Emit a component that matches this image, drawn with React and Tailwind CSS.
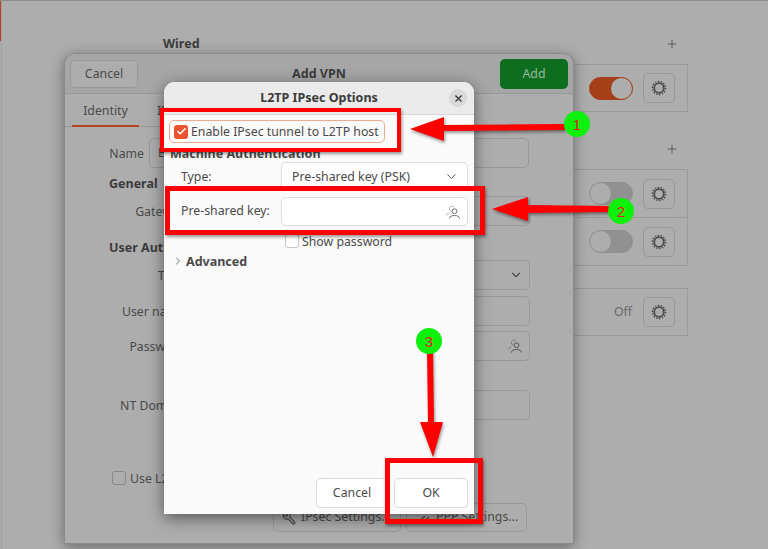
import { Check, ChevronDown, ChevronRight, Plus, Wrench, X } from 'lucide-react'

const FONT = 'font-["Noto_Sans",sans-serif]'

function Gear() {
  return (
    <svg width="16" height="16" viewBox="0 0 16 16" fill="none">
      <circle cx="8" cy="8" r="6.6" stroke="#4a4a4a" strokeWidth="1.3" strokeDasharray="1.6 1.35" />
      <circle cx="8" cy="8" r="4.8" stroke="#4a4a4a" strokeWidth="1.8" />
    </svg>
  )
}

function PersonIcon({ color = '#6e6e6e' }) {
  return (
    <svg width="16" height="16" viewBox="0 0 16 16" fill="none" stroke={color} strokeWidth="1">
      <circle cx="9.5" cy="7.2" r="2.4" />
      <path d="M4.5 14.5c0-2.2 2.2-3 5-3s5 .8 5 3" />
      <path d="M6.3 7.2C4.5 6.6 4 5 4.6 3.6 5.3 2.2 7.4 1.6 8.9 2.8" strokeOpacity="0.55" />
      <path d="M1.5 11.5c.2-1.4 1.2-2.2 2.7-2.5" strokeOpacity="0.55" />
    </svg>
  )
}

function Toggle({ on }) {
  return (
    <div className={`flex h-[23px] w-11 items-center rounded-full border ${on ? 'justify-end border-[#a53f17] bg-[#a53f17]' : 'justify-start border-[#8f8f8f] bg-[#919191]'}`}>
      <div className="h-[21px] w-[21px] rounded-full bg-[#adadad]" />
    </div>
  )
}

function GearButton() {
  return (
    <div className="flex h-[30px] w-8 items-center justify-center rounded-[5px] border border-[#989898]">
      <Gear />
    </div>
  )
}

function CardRow({ children, className = 'h-[46px]' }) {
  return (
    <div className={`flex items-center justify-end gap-[10px] pr-3 ${className}`}>
      {children}
    </div>
  )
}

function BackField({ label, top, labelWidth = 'w-[119px]', fieldWidth = 'w-[340px]', children }) {
  return (
    <div className={`flex h-[30px] items-center ${top}`}>
      <div className={`pt-[2px] text-right text-[#4a4a4a] ${labelWidth}`}>{label}</div>
      <div className={`ml-[5px] flex h-full items-center justify-between rounded-[5px] border border-[#999] pl-2 pr-[6px] text-[#4a4a4a] ${fieldWidth}`}>
        {children}
      </div>
    </div>
  )
}

function Annotation({ left, top, children }) {
  return (
    <div
      className={`absolute flex h-[26px] w-[26px] items-center justify-center rounded-full bg-[#0bf10b] font-["Liberation_Sans",sans-serif] text-[15px] leading-none text-[#ee1122] ${left} ${top}`}
    >
      {children}
    </div>
  )
}

export default function App() {
  return (
    <div className={`relative h-[549px] w-[768px] overflow-hidden border-t border-[#8e8e8e] bg-[#adadad] text-[12.3px] ${FONT}`}>
      {/* sidebar edge */}
      <div className="absolute left-0 top-0 h-[40px] w-[1px] bg-[#b5451e]" />
      <div className="absolute left-[1px] top-0 h-full w-[1px] bg-[#a0a0a0]" />

      {/* network settings behind the dialogs */}
      <div className="absolute left-[163px] top-[33px] w-[525px]">
        <div className="flex h-5 items-center justify-between pr-[9px]">
          <span className="text-[12.5px] font-bold text-[#3c3c3c]">Wired</span>
          <Plus size={14} strokeWidth={1.2} className="text-[#3c3c3c]" />
        </div>
        <div className="mt-[10px] border border-[#9a9a9a]">
          <CardRow><Toggle on /><GearButton /></CardRow>
        </div>
        <div className="mt-[27px] flex h-5 items-center justify-end pr-[9px]">
          <Plus size={14} strokeWidth={1.2} className="text-[#3c3c3c]" />
        </div>
        <div className="mt-[10px] border border-[#9a9a9a]">
          <CardRow className="h-[47px]"><Toggle /><GearButton /></CardRow>
          <CardRow className="h-[48px] border-t border-[#9a9a9a]"><Toggle /><GearButton /></CardRow>
        </div>
        <div className="mt-[22px] border border-[#9a9a9a]">
          <CardRow><span className="mr-[1px] text-[#6a6a6a]">Off</span><GearButton /></CardRow>
        </div>
      </div>

      {/* Add VPN dialog */}
      <div className="absolute left-[64px] top-[52px] h-[491px] w-[510px] rounded-t-[11px] border border-[#8a8a8a] bg-[#adadad] shadow-[0_3px_14px_rgba(0,0,0,0.4)]">
        <div className="flex h-10 items-center justify-between rounded-t-[10px] border-b border-[#989898] bg-[#a6a6a6] pl-[5px] pr-[5px]">
          <div className="flex h-[28px] w-[68px] items-center justify-center rounded-[5px] border border-[#989898] bg-[#adadad] pt-[2px] text-[#4a4a4a]">Cancel</div>
          <div className="pt-[1px] text-[12.5px] font-bold text-[#3c3c3c]">Add VPN</div>
          <div className="flex h-[30px] w-[68px] items-center justify-center rounded-[5px] bg-[#0d6e1f] pt-[2px] text-[#9cb89f]">Add</div>
        </div>
        <div className="flex h-[33px] border-b border-[#989898] text-[#4a4a4a]">
          <div className="ml-[7px] flex h-[33px] w-[67px] items-center justify-center border-b-2 border-[#b5451e] pt-[3px]">Identity</div>
          <div className="ml-[18px] flex items-center pt-[3px]">IPv4</div>
        </div>
        <BackField label="Name" top="mt-[11px]" labelWidth="w-[79px]" fieldWidth="w-[380px]">E</BackField>
        <div className="ml-[44px] mt-[6px] h-5 text-[12.5px] font-bold leading-5 text-[#3c3c3c]">General</div>
        <BackField label="Gateway" top="mt-[2px]" labelWidth="w-[120px]" />
        <div className="ml-[44px] mt-[12px] h-5 text-[12.5px] font-bold leading-5 text-[#3c3c3c]">User Authentication</div>
        <BackField label="Type" top="mt-[2px]" labelWidth="w-[120px]"><span>Password</span><ChevronDown size={14} /></BackField>
        <BackField label="User name" top="mt-[6px]" labelWidth="w-[120px]" />
        <BackField label="Password" top="mt-[5px]" labelWidth="w-[120px]"><span /><PersonIcon color="#555" /></BackField>
        <BackField label="NT Domain" top="mt-[29px]" labelWidth="w-[120px]" />
        <div className="ml-[47px] mt-[48px] flex h-5 items-center gap-[4px] text-[#4a4a4a]">
          <div className="h-[14px] w-[14px] rounded-[3px] border border-[#8a8a8a]" />
          <span className="pt-[2px]">Use L2TP</span>
        </div>
        <div className="ml-[208px] mt-[15px] flex gap-[5px] text-[#4a4a4a]">
          <div className="flex h-[29px] w-[128px] items-center gap-[5px] rounded-[5px] border border-[#999] pl-[8px]">
            <Wrench size={14} className="-scale-x-100" />
            <span>IPsec Settings...</span>
          </div>
          <div className="flex h-[29px] w-[121px] items-center gap-[6px] rounded-[5px] border border-[#999] pl-[9px]">
            <svg width="14" height="14" viewBox="0 0 14 14" fill="none" stroke="#4a4a4a" strokeWidth="1.2">
              <path d="M1 12 9 5M5 13l8-7" />
            </svg>
            <span>PPP Settings...</span>
          </div>
        </div>
      </div>

      {/* L2TP IPsec options */}
      <div className="absolute left-[164px] top-[81px] flex h-[432px] w-[310px] flex-col rounded-t-[11px] bg-[#fafafa] text-[#4a4a4a] shadow-[0_4px_16px_rgba(0,0,0,0.5)]">
        <div className="relative flex h-[33px] items-center justify-center rounded-t-[11px] border-b border-[#d8d8d8] bg-[#ebebeb]">
          <span className="text-[12.5px] font-bold text-[#3a3a3a]">L2TP IPsec Options</span>
          <div className="absolute right-[7px] top-[7px] flex h-[18px] w-[18px] items-center justify-center rounded-full bg-[#d9d9d9]">
            <X size={11} strokeWidth={2.5} className="text-[#333]" />
          </div>
        </div>
        <div className="ml-[5px] mt-[5px] flex h-[23px] w-[216px] items-center gap-[3px] whitespace-nowrap rounded-[5px] border border-[#f0a890] pl-1">
          <div className="flex h-[14px] w-[14px] items-center justify-center rounded-[3px] bg-[#e9532f]">
            <Check size={11} strokeWidth={3.5} className="text-white" />
          </div>
          <span className="pt-[2px]">Enable IPsec tunnel to L2TP host</span>
        </div>
        <div className="ml-[6px] h-5 pt-[1px] text-[12.5px] font-bold leading-5">Machine Authentication</div>
        <div className="ml-[17px] mt-[-1px] flex h-[29px] items-center">
          <div className="w-[100px] pt-[2px]">Type:</div>
          <div className="flex h-full w-[187px] items-center justify-between rounded-[5px] border border-[#ddd] bg-white pl-[10px] pr-2">
            <span className="pt-[2px]">Pre-shared key (PSK)</span>
            <ChevronDown size={15} strokeWidth={1.5} />
          </div>
        </div>
        <div className="ml-[17px] mt-[6px] flex h-[29px] items-center">
          <div className="w-[100px]">Pre-shared key:</div>
          <div className="flex h-full w-[187px] items-center justify-end rounded-[5px] border border-[#ddd] bg-white pr-[6px]">
            <PersonIcon />
          </div>
        </div>
        <div className="ml-[121px] mt-[5px] flex h-5 items-center gap-[3px]">
          <div className="h-[14px] w-[14px] rounded-[3px] border border-[#c8c8c8] bg-white" />
          <span className="pt-[2px]">Show password</span>
        </div>
        <div className="ml-[8px] flex h-5 items-center gap-[2px] text-[12.5px] font-bold">
          <ChevronRight size={12} strokeWidth={1.5} />
          <span className="pt-[2px]">Advanced</span>
        </div>
        <div className="mb-[6px] mr-[6px] mt-auto flex justify-end gap-[6px]">
          <div className="flex h-[30px] w-[72px] items-center justify-center rounded-[5px] border border-[#ddd] bg-white">Cancel</div>
          <div className="flex h-[30px] w-[74px] items-center justify-center rounded-[5px] border border-[#ddd] bg-white">OK</div>
        </div>
      </div>

      {/* red highlight boxes */}
      <div className="absolute left-[160px] top-[107px] h-[44px] w-[241px] border-[4px] border-[#fe0000] shadow-[1px_2px_3px_rgba(0,0,0,0.4)]" />
      <div className="absolute left-[165px] top-[185px] h-[49px] w-[320px] border-[5px] border-[#fe0000] shadow-[1px_2px_3px_rgba(0,0,0,0.4)]" />
      <div className="absolute left-[385px] top-[457px] h-[66px] w-[98px] border-[5px] border-[#fe0000] shadow-[1px_2px_3px_rgba(0,0,0,0.4)]" />

      {/* arrows */}
      <svg className="absolute left-0 top-[-1px]" width="768" height="549" viewBox="0 0 768 549">
        <g fill="#fe0000" style={{ filter: 'drop-shadow(1px 2px 1.5px rgba(0,0,0,0.4))' }}>
          <polygon points="565,124 565,130 444,131 444,141 410,129 444,117 444,125" />
          <polygon points="610,206 610,212 528,213 528,221 492,209 528,197 528,205" />
          <polygon points="427,350 433,350 434,422 443,422 433,457 420,422 428,422" />
        </g>
      </svg>

      <Annotation left="left-[564px]" top="top-[110px]">1</Annotation>
      <Annotation left="left-[608px]" top="top-[197px]">2</Annotation>
      <Annotation left="left-[416px]" top="top-[327px]">3</Annotation>
    </div>
  )
}
